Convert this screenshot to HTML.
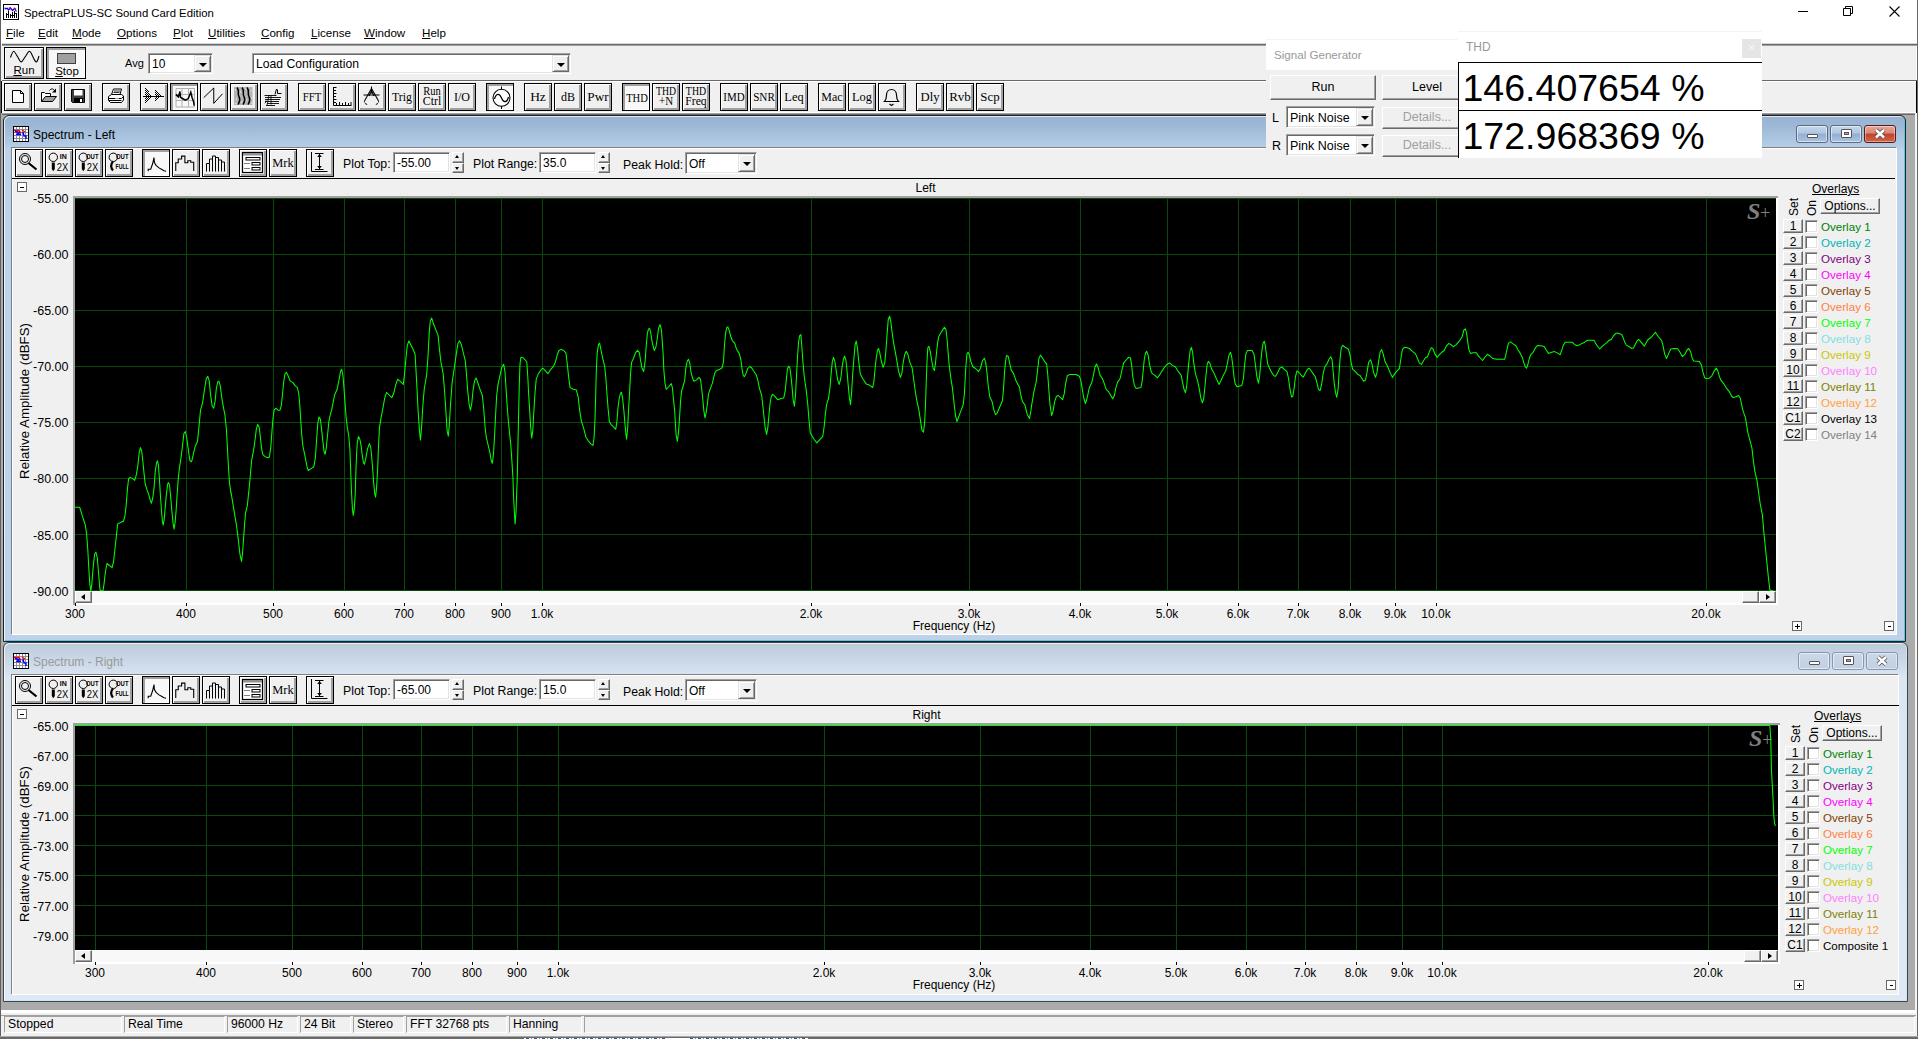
<!DOCTYPE html>
<html><head><meta charset="utf-8"><title>SpectraPLUS-SC Sound Card Edition</title>
<style>
html,body{margin:0;padding:0}
body{width:1918px;height:1039px;position:relative;overflow:hidden;background:#fff;font-family:"Liberation Sans",sans-serif;font-size:12px;color:#000}
div,svg{position:absolute;box-sizing:border-box}
.t{white-space:nowrap;line-height:16px;height:16px}
.tc{white-space:nowrap;line-height:16px;height:16px;text-align:center}
.tr{white-space:nowrap;line-height:16px;height:16px;text-align:right}
.ui{font-family:"Liberation Sans",sans-serif;font-size:12px}
.tb{background:#f0f0f0;border:1px solid #000;box-shadow:inset 1px 1px 0 #fff,inset -1px -1px 0 #a0a0a0,inset -2px -2px 0 #a0a0a0}
.tbp{background:#f8f8f8;border:1px solid #000;box-shadow:inset 1px 1px 0 #a0a0a0,inset 2px 2px 0 #a0a0a0,inset -1px -1px 0 #fff}
.tb svg{left:0;top:0}
.tbp svg{left:1px;top:1px}
.sf{font-family:"Liberation Serif",serif;font-size:13px;text-align:center;white-space:nowrap;transform:scaleX(.88)}
.sunk{background:#fff;border:1px solid;border-color:#a0a0a0 #fff #fff #a0a0a0;box-shadow:inset 1px 1px 0 #696969,inset -1px -1px 0 #e3e3e3}
.rais{background:#f0f0f0;border:1px solid;border-color:#fff #696969 #696969 #fff;box-shadow:inset -1px -1px 0 #a0a0a0,inset 1px 1px 0 #f0f0f0}
.dd{background:#f0f0f0;border:1px solid;border-color:#e3e3e3 #696969 #696969 #e3e3e3;box-shadow:inset 1px 1px 0 #fff,inset -1px -1px 0 #a0a0a0}
.dd:after{content:"";position:absolute;left:50%;top:50%;margin:-1px 0 0 -4px;border:4px solid transparent;border-top:4px solid #000;border-bottom:none}
.obtn{background:#f0f0f0;border:1px solid;border-color:#fff #696969 #696969 #fff;box-shadow:inset -1px -1px 0 #a0a0a0;text-align:center;line-height:12px;font-size:12px}
.chk{background:#fff;border:1px solid;border-color:#a0a0a0 #fff #fff #a0a0a0;box-shadow:inset 1px 1px 0 #696969,inset -1px -1px 0 #e3e3e3}
.pm{background:#fff;border:1px solid #696969;font-size:11px;line-height:8px;text-align:center;font-weight:bold}
u{text-decoration:underline}
</style></head>
<body>
<div style="left:0px;top:0px;width:1918px;height:43px;background:#fff"></div>
<svg style="left:3px;top:4px" width="16" height="16" viewBox="0 0 16 16"><rect x="0.500" y="0.500" width="15" height="15" fill="#fff" stroke="#000"/><path d="M1.500 4.500h3l1 1.500l2-2l2 2.500l2-2l2 3" stroke="#00f" fill="none" stroke-width="1.300"/><path d="M6 3.500l2 1.500M11 4l2 1" stroke="#f00" fill="none" stroke-width="1.300"/><path d="M3.500 14v-5M5.500 14v-7M7.500 14v-4M9.500 14v-6M11.500 14v-7M13.500 14v-5M3 10.500h3M8 11.500h3M11 9.500h3" stroke="#000"/></svg>
<div class="t" id="apptitle" style="left:24px;top:5px;font-size:11.35px">SpectraPLUS-SC Sound Card Edition</div>
<svg style="left:1780px;top:0" width="138" height="23" viewBox="0 0 138 23"><path d="M18 11.5h10" stroke="#000" fill="none"/><path d="M63.5 8.500h7v7h-7z M65.500 8.500v-2h7v7h-2" stroke="#000" fill="none"/><path d="M109.500 6.500l10 10M119.500 6.500l-10 10" stroke="#000" fill="none" stroke-width="1.1"/></svg>
<div class="t mn" style="left:6px;top:25px;font-size:11.600px"><u>F</u>ile</div>
<div class="t mn" style="left:38px;top:25px;font-size:11.600px"><u>E</u>dit</div>
<div class="t mn" style="left:72px;top:25px;font-size:11.600px"><u>M</u>ode</div>
<div class="t mn" style="left:117px;top:25px;font-size:11.600px"><u>O</u>ptions</div>
<div class="t mn" style="left:173px;top:25px;font-size:11.600px"><u>P</u>lot</div>
<div class="t mn" style="left:208px;top:25px;font-size:11.600px"><u>U</u>tilities</div>
<div class="t mn" style="left:261px;top:25px;font-size:11.600px"><u>C</u>onfig</div>
<div class="t mn" style="left:311px;top:25px;font-size:11.600px"><u>L</u>icense</div>
<div class="t mn" style="left:364px;top:25px;font-size:11.600px"><u>W</u>indow</div>
<div class="t mn" style="left:422px;top:25px;font-size:11.600px"><u>H</u>elp</div>
<div style="left:0px;top:43px;width:1918px;height:70px;background:#f0f0f0"></div>
<div style="left:0px;top:43px;width:1918px;height:1px;background:#d8d8d8"></div>
<div style="left:0px;top:44px;width:1918px;height:1px;background:#696969"></div>
<div style="left:0px;top:45px;width:1918px;height:1px;background:#a0a0a0"></div>
<div style="left:0px;top:80px;width:1918px;height:1px;background:#696969"></div>
<div style="left:0px;top:81px;width:1918px;height:1px;background:#fff"></div>
<div style="left:1px;top:112px;width:1914px;height:898px;background:#ababab"></div>
<div style="left:2px;top:112px;width:1914px;height:1px;background:#fff"></div>
<div style="left:2px;top:113px;width:1914px;height:1px;background:#a0a0a0"></div>
<div style="left:2px;top:114px;width:1914px;height:1px;background:#696969"></div>
<div style="left:0px;top:0px;width:1px;height:1039px;background:#606060"></div>
<div style="left:1px;top:43px;width:1px;height:70px;background:#f0f0f0"></div>
<div style="left:1px;top:81px;width:1px;height:32px;background:#000"></div>
<div style="left:1915px;top:113px;width:2px;height:924px;background:#f4f4f4"></div>
<div style="left:1916px;top:81px;width:1px;height:32px;background:#000"></div>
<div style="left:1916px;top:46px;width:1px;height:34px;background:#fff"></div>
<div style="left:1917px;top:0px;width:1px;height:1039px;background:#6a6a6a"></div>
<div class="tb" style="left:4px;top:47px;width:40px;height:32px;"><svg width="38" height="30" viewBox="0 0 38 30"><path d="M5.500 9.500C7 5 8 3.200 8.750 3.200S11 6 12.500 8.600S15 13.900 16.250 13.900S19 10 20.300 8.600S23 3.200 24.400 3.200S26.500 6 27.800 8.600S30 13.900 31.250 13.900S33 11 34 8" stroke="#000" fill="none" stroke-width="1.100"/></svg>
<div class="tc" style="left:0;top:14px;width:38px;font-size:11.500px"><u>R</u>un</div></div>
<div class="tbp" style="left:46px;top:47px;width:40px;height:32px;"><div style="left:10px;top:5px;width:19px;height:11px;background:#a0a0a0;border:1px solid #404040"></div>
<div class="tc" style="left:1px;top:15px;width:38px;font-size:11.500px"><u>S</u>top</div></div>
<div class="t" style="left:125px;top:55px;font-size:11px">Avg</div>
<div class="sunk" style="left:148px;top:53px;width:65px;height:21px;"><div class="t" style="left:3px;top:2px;font-size:12px">10</div>
<div class="dd" style="left:45px;top:1px;width:17px;height:17px;"></div></div>
<div class="sunk" style="left:252px;top:53px;width:319px;height:21px;"><div class="t" style="left:3px;top:2px;font-size:12.2px">Load Configuration</div>
<div class="dd" style="left:299px;top:1px;width:17px;height:17px;"></div></div>
<div class="tb" style="left:4px;top:83px;width:28px;height:28px;"><svg width="26" height="26" viewBox="0 0 26 26"><path d="M7.500 6.500h8l3 3v9h-11z" fill="#fff" stroke="#000"/><path d="M15.500 6.500v3h3" fill="none" stroke="#000"/></svg></div>
<div class="tb" style="left:34px;top:83px;width:28px;height:28px;"><svg width="26" height="26" viewBox="0 0 26 26"><path d="M6.500 17.500v-9h3l1 1h5v3" fill="#fff" stroke="#000"/><path d="M6.500 17.500l4-5h11l-4 5z" fill="#a0a0a0" stroke="#000"/><path d="M14.500 6.500c2-2.500 4-2 5.500 1" fill="none" stroke="#000"/><path d="M21 4.500v4h-4z" fill="#000"/></svg></div>
<div class="tb" style="left:64px;top:83px;width:28px;height:28px;"><svg width="26" height="26" viewBox="0 0 26 26"><path d="M6.500 5.500h13v13h-12l-1-1z" fill="#404040" stroke="#000"/><rect x="9" y="6" width="8.500" height="5.500" fill="#fff"/><rect x="9" y="14" width="9" height="4.500" fill="#000"/><rect x="15" y="15" width="2" height="3" fill="#fff"/></svg></div>
<div class="tb" style="left:102px;top:83px;width:28px;height:28px;"><svg width="26" height="26" viewBox="0 0 26 26"><path d="M8.500 10.500l2-5.500h8l-1.500 5.500" fill="#fff" stroke="#000"/><path d="M11 7h6M10.500 8.500h6" stroke="#000" stroke-width=".8"/><path d="M5.500 12.500l3-2h10l2 1.500v4l-2 2.500h-11l-2-2z" fill="#fff" stroke="#000"/><path d="M5.500 14.500h13l2-2M6 16.500h12.500" stroke="#000" fill="none"/><path d="M12 14.500h4" stroke="#a0a0a0"/></svg></div>
<div class="tb" style="left:140px;top:83px;width:28px;height:28px;"><svg width="26" height="26" viewBox="0 0 26 26"><defs><pattern id="dth" width="2" height="2" patternUnits="userSpaceOnUse"><rect width="1" height="1" fill="#000"/><rect x="1" y="1" width="1" height="1" fill="#000"/></pattern></defs><path d="M4 3.500l7.500 8.500l-7.500 8.500z M13.500 5.500l6.500 6.500l-6.500 6.500z" fill="url(#dth)" shape-rendering="crispEdges"/><path d="M2 12.500h21" stroke="#000"/></svg></div>
<div class="tbp" style="left:170px;top:83px;width:28px;height:28px;"><svg width="26" height="26" viewBox="0 0 26 26"><path d="M4 3.500h18.500v18.500h-18.500zM10 4v18M16.500 4v18M4 9.500h18M4 15.500h18" stroke="#b0b0b0" fill="none"/><path d="M3.800 9.400L6.300 11.900L8 6.500L8.400 12.300L11.300 14L13.400 15.250L16.300 13.600L18.800 7.300L20 12.300L21.750 17.300L22.200 20.700" fill="none" stroke="#000" stroke-width="1.500"/></svg></div>
<div class="tb" style="left:200px;top:83px;width:28px;height:28px;"><svg width="26" height="26" viewBox="0 0 26 26"><path d="M2.750 13.600L12.750 4V19.400L21.500 9.800" fill="none" stroke="#000" stroke-width="1"/></svg></div>
<div class="tb" style="left:230px;top:83px;width:28px;height:28px;"><svg width="26" height="26" viewBox="0 0 26 26"><rect x="3" y="3" width="18.500" height="18" fill="#b4b4b4"/><path d="M6 3.500c3 4 0 5 2 9s0 6 -1 8M11 3.500c3 4 0 5 2 9s0 6 -1 8M16 3.500c3 4 0 5 2 9s0 6 -1 8" fill="none" stroke="#000" stroke-width="1.500"/><path d="M4 6h1M9 8h1M14.500 5h1M19.500 7h1M5 15h1M10 18h1M15 16h1M20 14h1M20 19h1M4.500 19.500h1" stroke="#fff"/></svg></div>
<div class="tb" style="left:260px;top:83px;width:28px;height:28px;"><svg width="26" height="26" viewBox="0 0 26 26"><path d="M3.500 11.500h12M4 13.500h16M4 15.500h15M4 17.500h14M6 19.500h12M5 21.500h9" stroke="#000" stroke-width=".9"/><path d="M14 10.500l1.500-5.500l1 1v3.500h4" fill="none" stroke="#000"/><path d="M3.500 20l1-3.500l1.500.5z" fill="#000"/><path d="M8 11l-2 10.500M10 11.500v9" stroke="#000" stroke-width=".8"/></svg></div>
<div class="tb" style="left:298px;top:83px;width:28px;height:28px;"><svg width="26" height="26" viewBox="0 0 26 26"><text x="13" y="17" text-anchor="middle" font-family="Liberation Serif,serif" font-size="13" textLength="18.5" lengthAdjust="spacingAndGlyphs">FFT</text></svg></div>
<div class="tb" style="left:328px;top:83px;width:28px;height:28px;"><svg width="26" height="26" viewBox="0 0 26 26"><path d="M4.500 3v18.500h18" fill="none" stroke="#000"/><path d="M5 3.500h2.500M5 6.500h2M5 9.500h2.500M5 12.500h2M5 15.500h2.500M5 18.500h2M7.500 21v-2M10.500 21v-3M13.500 21v-2M16.500 21v-3M19.500 21v-2M22 21v-3" stroke="#000"/></svg></div>
<div class="tb" style="left:358px;top:83px;width:28px;height:28px;"><svg width="26" height="26" viewBox="0 0 26 26"><path d="M12.500 2.500v7M4.500 11h16" stroke="#000" fill="none"/><path d="M12.500 4.500L6 16M12.500 4.500L19 16M12.500 7L10 12M12.500 7L15 12" stroke="#000" fill="none" stroke-width="1.100"/><path d="M6 16c-1.500 2 0 4.500 3 4.500M19 16c1.500 2 0 4.500 -3 4.500" stroke="#000" fill="none" stroke-dasharray="2.500 1"/></svg></div>
<div class="tb" style="left:388px;top:83px;width:28px;height:28px;"><svg width="26" height="26" viewBox="0 0 26 26"><text x="13" y="17" text-anchor="middle" font-family="Liberation Serif,serif" font-size="13" textLength="20" lengthAdjust="spacingAndGlyphs">Trig</text></svg></div>
<div class="tb" style="left:418px;top:83px;width:28px;height:28px;"><svg width="26" height="26" viewBox="0 0 26 26"><text x="13" y="11" text-anchor="middle" font-family="Liberation Serif,serif" font-size="11.5" textLength="17.5" lengthAdjust="spacingAndGlyphs">Run</text><text x="13" y="20.500" text-anchor="middle" font-family="Liberation Serif,serif" font-size="11.5" textLength="18.5" lengthAdjust="spacingAndGlyphs">Ctrl</text></svg></div>
<div class="tb" style="left:448px;top:83px;width:28px;height:28px;"><svg width="26" height="26" viewBox="0 0 26 26"><text x="13" y="17" text-anchor="middle" font-family="Liberation Serif,serif" font-size="13" textLength="16" lengthAdjust="spacingAndGlyphs">I/O</text></svg></div>
<div class="tbp" style="left:486px;top:83px;width:28px;height:28px;"><svg width="26" height="26" viewBox="0 0 26 26"><circle cx="13.500" cy="12.800" r="8.500" fill="#fff" stroke="#000" stroke-width="1.100"/><path d="M13.500 1.500v3M13.500 21v3" stroke="#000"/><path d="M6.500 14c1.500-6 5-6 7-1s5.500 5 7-1" fill="none" stroke="#000" stroke-width="1.200"/></svg></div>
<div class="tb" style="left:524px;top:83px;width:28px;height:28px;"><svg width="26" height="26" viewBox="0 0 26 26"><text x="13" y="17" text-anchor="middle" font-family="Liberation Serif,serif" font-size="13" textLength="15.7" lengthAdjust="spacingAndGlyphs">Hz</text></svg></div>
<div class="tb" style="left:554px;top:83px;width:28px;height:28px;"><svg width="26" height="26" viewBox="0 0 26 26"><text x="13" y="17" text-anchor="middle" font-family="Liberation Serif,serif" font-size="13" textLength="14" lengthAdjust="spacingAndGlyphs">dB</text></svg></div>
<div class="tb" style="left:584px;top:83px;width:28px;height:28px;"><svg width="26" height="26" viewBox="0 0 26 26"><text x="13" y="17" text-anchor="middle" font-family="Liberation Serif,serif" font-size="13" textLength="21.3" lengthAdjust="spacingAndGlyphs">Pwr</text></svg></div>
<div class="tbp" style="left:622px;top:83px;width:28px;height:28px;"><svg width="26" height="26" viewBox="0 0 26 26"><text x="13" y="17" text-anchor="middle" font-family="Liberation Serif,serif" font-size="13" textLength="21.7" lengthAdjust="spacingAndGlyphs">THD</text></svg></div>
<div class="tb" style="left:652px;top:83px;width:28px;height:28px;"><svg width="26" height="26" viewBox="0 0 26 26"><text x="13" y="11" text-anchor="middle" font-family="Liberation Serif,serif" font-size="11.5" textLength="20" lengthAdjust="spacingAndGlyphs">THD</text><text x="13" y="20.500" text-anchor="middle" font-family="Liberation Serif,serif" font-size="11.5" textLength="14" lengthAdjust="spacingAndGlyphs">+N</text></svg></div>
<div class="tb" style="left:682px;top:83px;width:28px;height:28px;"><svg width="26" height="26" viewBox="0 0 26 26"><text x="13" y="11" text-anchor="middle" font-family="Liberation Serif,serif" font-size="11.5" textLength="20.3" lengthAdjust="spacingAndGlyphs">THD</text><text x="13" y="20.500" text-anchor="middle" font-family="Liberation Serif,serif" font-size="11.5" textLength="21.5" lengthAdjust="spacingAndGlyphs">Freq</text></svg></div>
<div class="tb" style="left:720px;top:83px;width:28px;height:28px;"><svg width="26" height="26" viewBox="0 0 26 26"><text x="13" y="17" text-anchor="middle" font-family="Liberation Serif,serif" font-size="13" textLength="21.3" lengthAdjust="spacingAndGlyphs">IMD</text></svg></div>
<div class="tb" style="left:750px;top:83px;width:28px;height:28px;"><svg width="26" height="26" viewBox="0 0 26 26"><text x="13" y="17" text-anchor="middle" font-family="Liberation Serif,serif" font-size="13" textLength="21.7" lengthAdjust="spacingAndGlyphs">SNR</text></svg></div>
<div class="tb" style="left:780px;top:83px;width:28px;height:28px;"><svg width="26" height="26" viewBox="0 0 26 26"><text x="13" y="17" text-anchor="middle" font-family="Liberation Serif,serif" font-size="13" textLength="19.3" lengthAdjust="spacingAndGlyphs">Leq</text></svg></div>
<div class="tb" style="left:818px;top:83px;width:28px;height:28px;"><svg width="26" height="26" viewBox="0 0 26 26"><text x="13" y="17" text-anchor="middle" font-family="Liberation Serif,serif" font-size="13" textLength="21.3" lengthAdjust="spacingAndGlyphs">Mac</text></svg></div>
<div class="tb" style="left:848px;top:83px;width:28px;height:28px;"><svg width="26" height="26" viewBox="0 0 26 26"><text x="13" y="17" text-anchor="middle" font-family="Liberation Serif,serif" font-size="13" textLength="20" lengthAdjust="spacingAndGlyphs">Log</text></svg></div>
<div class="tb" style="left:878px;top:83px;width:28px;height:28px;"><svg width="26" height="26" viewBox="0 0 26 26"><path d="M5.500 17.500h14c-2-2-2-4-2-6.500c0-3-2-5.500-5-5.500s-5 2.500-5 5.500c0 2.500 0 4.500-2 6.500z" fill="none" stroke="#000" stroke-width="1.200"/><path d="M10.500 20l2 1.500l2-1.500" fill="none" stroke="#000" stroke-width="1.200"/></svg></div>
<div class="tb" style="left:916px;top:83px;width:28px;height:28px;"><svg width="26" height="26" viewBox="0 0 26 26"><text x="13" y="17" text-anchor="middle" font-family="Liberation Serif,serif" font-size="13" textLength="19" lengthAdjust="spacingAndGlyphs">Dly</text></svg></div>
<div class="tb" style="left:946px;top:83px;width:28px;height:28px;"><svg width="26" height="26" viewBox="0 0 26 26"><text x="13" y="17" text-anchor="middle" font-family="Liberation Serif,serif" font-size="13" textLength="21.7" lengthAdjust="spacingAndGlyphs">Rvb</text></svg></div>
<div class="tb" style="left:976px;top:83px;width:28px;height:28px;"><svg width="26" height="26" viewBox="0 0 26 26"><text x="13" y="17" text-anchor="middle" font-family="Liberation Serif,serif" font-size="13" textLength="19.3" lengthAdjust="spacingAndGlyphs">Scp</text></svg></div>
<div style="left:3px;top:115px;width:1903px;height:527px;background:linear-gradient(#98b3d1 0,#9db8d6 10px,#b4cce6 30px,#bcd3ec 34px,#bcd2ea 100%);border:1px solid #222;border-radius:6px 6px 0 0;box-shadow:inset 1px 1px 0 rgba(255,255,255,.7),inset -1px -1px 0 #50c8f0"></div>
<div style="left:11px;top:147px;width:1885px;height:487px;background:#f0f0f0;border-top:1px solid #808080;border-left:1px solid #808080;box-shadow:1px 1px 0 #fff,inset 1px 1px 0 #fff"></div>
<svg style="left:13px;top:126px" width="16" height="16" viewBox="0 0 16 16"><rect x="0.500" y="0.500" width="15" height="15" fill="#fff" stroke="#000"/><path d="M3.500 1v14M6.500 1v14M9.500 1v14M12.500 1v14M1 3.500h14M1 6.500h14M1 9.500h14M1 12.500h14" stroke="#909090"/><path d="M1 4.500h5l2 3M9 4l3 2" stroke="#f00" fill="none" stroke-width="1.4"/><path d="M2 5.500l4 1l-2 2l4 0M10 6l1 4l2 0l0 3" stroke="#00f" fill="none" stroke-width="1.4"/></svg>
<div class="t" style="left:33px;top:127px;color:#000;font-size:12px">Spectrum - Left</div>
<div style="left:1796px;top:125px;width:32px;height:18px;background:linear-gradient(#c4d6ea 0,#b0c6e0 45%,#93aed0 50%,#a9c4e2 100%);border:1px solid #5a6a80;border-radius:3px;box-shadow:inset 0 0 0 1px rgba(255,255,255,.55)"><div style="left:10px;top:8px;width:11px;height:4px;background:#fff;border:1px solid #555;border-radius:1px"></div></div>
<div style="left:1830px;top:125px;width:32px;height:18px;background:linear-gradient(#c4d6ea 0,#b0c6e0 45%,#93aed0 50%,#a9c4e2 100%);border:1px solid #5a6a80;border-radius:3px;box-shadow:inset 0 0 0 1px rgba(255,255,255,.55)"><div style="left:10px;top:3px;width:11px;height:9px;background:#fff;border:1px solid #555;border-radius:1px"></div>
<div style="left:13px;top:6px;width:5px;height:3px;background:#9ab;border:1px solid #556"></div></div>
<div style="left:1864px;top:125px;width:32px;height:18px;background:linear-gradient(#e8a99a 0,#d98472 45%,#c4412a 50%,#d0654a 100%);border:1px solid #5a1a1a;border-radius:3px;box-shadow:inset 0 0 0 1px rgba(255,255,255,.4)"><svg width="29" height="16" viewBox="0 0 29 16" style="left:0;top:0"><path d="M11 4l8 7.500M19 4l-8 7.500" stroke="#555" stroke-width="4.200" fill="none"/><path d="M11 4l8 7.500M19 4l-8 7.500" stroke="#fff" stroke-width="2.400" fill="none"/></svg></div>
<div class="tb" style="left:15px;top:149px;width:28px;height:28px;"><svg width="26" height="26" viewBox="0 0 26 26"><circle cx="9" cy="9" r="5.500" fill="none" stroke="#000" stroke-width="1"/><circle cx="9" cy="9" r="3.500" fill="none" stroke="#000" stroke-width="1"/><path d="M12.500 13l8 6.500" stroke="#000" stroke-width="2.200"/></svg></div>
<div class="tb" style="left:45px;top:149px;width:28px;height:28px;"><svg width="26" height="26" viewBox="0 0 26 26"><circle cx="7.300" cy="7.300" r="4.200" fill="none" stroke="#000"/><path d="M5.800 12.500h3v6.500l-1.500 2.200l-1.500-2.200z" fill="#000"/><text x="13.800" y="9.200" font-family="Liberation Sans,sans-serif" font-weight="bold" font-size="6.800" textLength="7" lengthAdjust="spacingAndGlyphs">IN</text><text x="10.800" y="20.800" font-family="Liberation Sans,sans-serif" font-size="11.500" textLength="11.500" lengthAdjust="spacingAndGlyphs">2X</text></svg></div>
<div class="tb" style="left:75px;top:149px;width:28px;height:28px;"><svg width="26" height="26" viewBox="0 0 26 26"><circle cx="7.300" cy="7.300" r="4.200" fill="none" stroke="#000"/><path d="M5.800 12.500h3v6.500l-1.500 2.200l-1.500-2.200z" fill="#000"/><text x="10" y="9.200" font-family="Liberation Sans,sans-serif" font-weight="bold" font-size="6.800" textLength="12.500" lengthAdjust="spacingAndGlyphs">OUT</text><text x="10.800" y="20.800" font-family="Liberation Sans,sans-serif" font-size="11.500" textLength="11.500" lengthAdjust="spacingAndGlyphs">2X</text></svg></div>
<div class="tb" style="left:105px;top:149px;width:28px;height:28px;"><svg width="26" height="26" viewBox="0 0 26 26"><circle cx="7.300" cy="7.300" r="4.200" fill="none" stroke="#000"/><path d="M7 11.500c-2.500 3-2 6.500 0 9" stroke="#000" stroke-width="2.200" fill="none"/><text x="10" y="9.200" font-family="Liberation Sans,sans-serif" font-weight="bold" font-size="6.800" textLength="12.500" lengthAdjust="spacingAndGlyphs">OUT</text><text x="9.500" y="18.800" font-family="Liberation Sans,sans-serif" font-weight="bold" font-size="6.800" textLength="13.300" lengthAdjust="spacingAndGlyphs">FULL</text></svg></div>
<div class="tbp" style="left:142px;top:149px;width:28px;height:28px;"><svg width="26" height="26" viewBox="0 0 26 26"><path d="M4.200 20.250V18.200H6.700L8.750 12.300L10 6.500L10.400 11.500L12.100 14.400L15 16.900L17.500 18.200L20 19.800L22.100 20.250" fill="none" stroke="#000" stroke-width="1.100"/></svg></div>
<div class="tb" style="left:172px;top:149px;width:28px;height:28px;"><svg width="26" height="26" viewBox="0 0 26 26"><path d="M2.750 21.100V12.750H5.250V9H8.600V6.100H11.900V12.750H14.800V10.700H17.750V12.300H20.700V21.100" fill="none" stroke="#000" stroke-width="1.100"/></svg></div>
<div class="tb" style="left:202px;top:149px;width:28px;height:28px;"><svg width="26" height="26" viewBox="0 0 26 26"><path d="M3.500 21.500V13.500H6.500V21.500M6.500 13.500V9H9.500V21.500M9.500 9V6H12.500V21.500M12.500 7.500H15.500V21.500M15.500 10H18.500V21.500M18.500 12H21.500V21.500" fill="none" stroke="#000"/></svg></div>
<div class="tb" style="left:239px;top:149px;width:28px;height:28px;"><svg width="26" height="26" viewBox="0 0 26 26"><rect x="2.500" y="2.500" width="20" height="20" fill="#fff" stroke="#000" stroke-width="1.200"/><rect x="3" y="3" width="19" height="2.500" fill="#909090"/><path d="M4.500 13.500h5M4.500 18.500h5" stroke="#000" stroke-dasharray="1 1"/><rect x="6" y="7.500" width="14" height="2.500" fill="#fff" stroke="#000"/><rect x="12" y="12.500" width="8" height="2.500" fill="#fff" stroke="#000"/><rect x="12" y="17.500" width="8" height="2.500" fill="#fff" stroke="#000"/></svg></div>
<div class="tb" style="left:269px;top:149px;width:28px;height:28px;"><svg width="26" height="26" viewBox="0 0 26 26"><text x="13" y="17.3" text-anchor="middle" font-family="Liberation Serif,serif" font-size="13" textLength="21.4" lengthAdjust="spacingAndGlyphs">Mrk</text></svg></div>
<div class="tb" style="left:306px;top:149px;width:28px;height:28px;"><svg width="26" height="26" viewBox="0 0 26 26"><path d="M4.500 2v19.500h16" fill="none" stroke="#000"/><path d="M8 3.500h8.500M8 19.500h8.500M12.500 4v15" stroke="#000"/><path d="M12.500 4l-2.300 3h4.600z M12.500 19l-2.300-3h4.600z" fill="#000"/></svg></div>
<div class="t" style="left:343px;top:156px;font-size:12.300px">Plot Top:</div>
<div class="sunk" style="left:393px;top:152px;width:57px;height:21px;"><div class="t" style="left:3px;top:2px">-55.00</div></div>
<div class="rais" style="left:452px;top:152px;width:12px;height:11px;"><div style="left:2px;top:2px;border:2.500px solid transparent;border-bottom:3px solid #000;border-top:none"></div></div>
<div class="rais" style="left:452px;top:163px;width:12px;height:10px;"><div style="left:2px;top:3px;border:2.500px solid transparent;border-top:3px solid #000;border-bottom:none"></div></div>
<div class="t" style="left:473px;top:156px;font-size:12.300px">Plot Range:</div>
<div class="sunk" style="left:539px;top:152px;width:57px;height:21px;"><div class="t" style="left:3px;top:2px">35.0</div></div>
<div class="rais" style="left:598px;top:152px;width:12px;height:11px;"><div style="left:2px;top:2px;border:2.500px solid transparent;border-bottom:3px solid #000;border-top:none"></div></div>
<div class="rais" style="left:598px;top:163px;width:12px;height:10px;"><div style="left:2px;top:3px;border:2.500px solid transparent;border-top:3px solid #000;border-bottom:none"></div></div>
<div class="t" style="left:623px;top:157px;font-size:12.300px">Peak Hold:</div>
<div class="sunk" style="left:685px;top:152px;width:72px;height:22px;"><div class="t" style="left:3px;top:3px;font-size:12px">Off</div>
<div class="dd" style="left:52px;top:1px;width:17px;height:18px;"></div></div>
<div style="left:12px;top:178px;width:1883px;height:1px;background:#000"></div>
<div class="pm" style="left:17px;top:182px;width:10px;height:10px;"><div style="left:2px;top:4px;width:4px;height:1px;background:#000"></div></div>
<div class="tc" style="left:75px;top:180px;width:1701px">Left</div>
<div class="tc" style="left:-75px;top:392.5px;width:200px;transform:rotate(-90deg);font-size:13.300px">Relative Amplitude (dBFS)</div>
<div class="tr" style="left:8px;top:190.9px;width:60.500px;font-size:12.500px">-55.00</div>
<div class="tr" style="left:8px;top:247.0px;width:60.500px;font-size:12.500px">-60.00</div>
<div class="tr" style="left:8px;top:303.1px;width:60.500px;font-size:12.500px">-65.00</div>
<div class="tr" style="left:8px;top:359.20000000000005px;width:60.500px;font-size:12.500px">-70.00</div>
<div class="tr" style="left:8px;top:415.3px;width:60.500px;font-size:12.500px">-75.00</div>
<div class="tr" style="left:8px;top:471.4px;width:60.500px;font-size:12.500px">-80.00</div>
<div class="tr" style="left:8px;top:527.5px;width:60.500px;font-size:12.500px">-85.00</div>
<div class="tr" style="left:8px;top:583.6px;width:60.500px;font-size:12.500px">-90.00</div>
<div style="left:73px;top:196px;width:1705px;height:409px;background:#fff;border-top:2px solid #a0a0a0;border-left:2px solid #a0a0a0"></div>
<div style="left:3px;top:642px;width:1905px;height:360px;background:linear-gradient(#bdcbdb 0,#c4d2e2 10px,#d4e0ee 28px,#dbe6f3 34px,#dfe9f5 100%);border:1px solid #444;border-radius:6px 6px 0 0;box-shadow:inset 1px 1px 0 rgba(255,255,255,.7),inset -1px -1px 0 #c8e8f8"></div>
<div style="left:11px;top:674px;width:1887px;height:320px;background:#f0f0f0;border-top:1px solid #808080;border-left:1px solid #808080;box-shadow:1px 1px 0 #fff,inset 1px 1px 0 #fff"></div>
<svg style="left:13px;top:653px" width="16" height="16" viewBox="0 0 16 16"><rect x="0.500" y="0.500" width="15" height="15" fill="#fff" stroke="#000"/><path d="M3.500 1v14M6.500 1v14M9.500 1v14M12.500 1v14M1 3.500h14M1 6.500h14M1 9.500h14M1 12.500h14" stroke="#909090"/><path d="M1 4.500h5l2 3M9 4l3 2" stroke="#f00" fill="none" stroke-width="1.4"/><path d="M2 5.500l4 1l-2 2l4 0M10 6l1 4l2 0l0 3" stroke="#00f" fill="none" stroke-width="1.4"/></svg>
<div class="t" style="left:33px;top:654px;color:#9a9a9a;font-size:12px">Spectrum - Right</div>
<div style="left:1798px;top:652px;width:32px;height:18px;background:linear-gradient(#cbd8e7 0,#c0cfe2 100%);border:1px solid #8797b3;border-radius:3px;box-shadow:inset 0 0 0 1px rgba(255,255,255,.55)"><div style="left:10px;top:8px;width:11px;height:4px;background:#fff;border:1px solid #555;border-radius:1px"></div></div>
<div style="left:1832px;top:652px;width:32px;height:18px;background:linear-gradient(#cbd8e7 0,#c0cfe2 100%);border:1px solid #8797b3;border-radius:3px;box-shadow:inset 0 0 0 1px rgba(255,255,255,.55)"><div style="left:10px;top:3px;width:11px;height:9px;background:#fff;border:1px solid #555;border-radius:1px"></div>
<div style="left:13px;top:6px;width:5px;height:3px;background:#9ab;border:1px solid #556"></div></div>
<div style="left:1866px;top:652px;width:32px;height:18px;background:linear-gradient(#cbd8e7 0,#c0cfe2 100%);border:1px solid #8797b3;border-radius:3px;box-shadow:inset 0 0 0 1px rgba(255,255,255,.4)"><svg width="29" height="16" viewBox="0 0 29 16" style="left:0;top:0"><path d="M11 4l8 7.500M19 4l-8 7.500" stroke="#555" stroke-width="4.200" fill="none"/><path d="M11 4l8 7.500M19 4l-8 7.500" stroke="#fff" stroke-width="2.400" fill="none"/></svg></div>
<div class="tb" style="left:15px;top:676px;width:28px;height:28px;"><svg width="26" height="26" viewBox="0 0 26 26"><circle cx="9" cy="9" r="5.500" fill="none" stroke="#000" stroke-width="1"/><circle cx="9" cy="9" r="3.500" fill="none" stroke="#000" stroke-width="1"/><path d="M12.500 13l8 6.500" stroke="#000" stroke-width="2.200"/></svg></div>
<div class="tb" style="left:45px;top:676px;width:28px;height:28px;"><svg width="26" height="26" viewBox="0 0 26 26"><circle cx="7.300" cy="7.300" r="4.200" fill="none" stroke="#000"/><path d="M5.800 12.500h3v6.500l-1.500 2.200l-1.500-2.200z" fill="#000"/><text x="13.800" y="9.200" font-family="Liberation Sans,sans-serif" font-weight="bold" font-size="6.800" textLength="7" lengthAdjust="spacingAndGlyphs">IN</text><text x="10.800" y="20.800" font-family="Liberation Sans,sans-serif" font-size="11.500" textLength="11.500" lengthAdjust="spacingAndGlyphs">2X</text></svg></div>
<div class="tb" style="left:75px;top:676px;width:28px;height:28px;"><svg width="26" height="26" viewBox="0 0 26 26"><circle cx="7.300" cy="7.300" r="4.200" fill="none" stroke="#000"/><path d="M5.800 12.500h3v6.500l-1.500 2.200l-1.500-2.200z" fill="#000"/><text x="10" y="9.200" font-family="Liberation Sans,sans-serif" font-weight="bold" font-size="6.800" textLength="12.500" lengthAdjust="spacingAndGlyphs">OUT</text><text x="10.800" y="20.800" font-family="Liberation Sans,sans-serif" font-size="11.500" textLength="11.500" lengthAdjust="spacingAndGlyphs">2X</text></svg></div>
<div class="tb" style="left:105px;top:676px;width:28px;height:28px;"><svg width="26" height="26" viewBox="0 0 26 26"><circle cx="7.300" cy="7.300" r="4.200" fill="none" stroke="#000"/><path d="M7 11.500c-2.500 3-2 6.500 0 9" stroke="#000" stroke-width="2.200" fill="none"/><text x="10" y="9.200" font-family="Liberation Sans,sans-serif" font-weight="bold" font-size="6.800" textLength="12.500" lengthAdjust="spacingAndGlyphs">OUT</text><text x="9.500" y="18.800" font-family="Liberation Sans,sans-serif" font-weight="bold" font-size="6.800" textLength="13.300" lengthAdjust="spacingAndGlyphs">FULL</text></svg></div>
<div class="tbp" style="left:142px;top:676px;width:28px;height:28px;"><svg width="26" height="26" viewBox="0 0 26 26"><path d="M4.200 20.250V18.200H6.700L8.750 12.300L10 6.500L10.400 11.500L12.100 14.400L15 16.900L17.500 18.200L20 19.800L22.100 20.250" fill="none" stroke="#000" stroke-width="1.100"/></svg></div>
<div class="tb" style="left:172px;top:676px;width:28px;height:28px;"><svg width="26" height="26" viewBox="0 0 26 26"><path d="M2.750 21.100V12.750H5.250V9H8.600V6.100H11.900V12.750H14.800V10.700H17.750V12.300H20.700V21.100" fill="none" stroke="#000" stroke-width="1.100"/></svg></div>
<div class="tb" style="left:202px;top:676px;width:28px;height:28px;"><svg width="26" height="26" viewBox="0 0 26 26"><path d="M3.500 21.500V13.500H6.500V21.500M6.500 13.500V9H9.500V21.500M9.500 9V6H12.500V21.500M12.500 7.500H15.500V21.500M15.500 10H18.500V21.500M18.500 12H21.500V21.500" fill="none" stroke="#000"/></svg></div>
<div class="tb" style="left:239px;top:676px;width:28px;height:28px;"><svg width="26" height="26" viewBox="0 0 26 26"><rect x="2.500" y="2.500" width="20" height="20" fill="#fff" stroke="#000" stroke-width="1.200"/><rect x="3" y="3" width="19" height="2.500" fill="#909090"/><path d="M4.500 13.500h5M4.500 18.500h5" stroke="#000" stroke-dasharray="1 1"/><rect x="6" y="7.500" width="14" height="2.500" fill="#fff" stroke="#000"/><rect x="12" y="12.500" width="8" height="2.500" fill="#fff" stroke="#000"/><rect x="12" y="17.500" width="8" height="2.500" fill="#fff" stroke="#000"/></svg></div>
<div class="tb" style="left:269px;top:676px;width:28px;height:28px;"><svg width="26" height="26" viewBox="0 0 26 26"><text x="13" y="17.3" text-anchor="middle" font-family="Liberation Serif,serif" font-size="13" textLength="21.4" lengthAdjust="spacingAndGlyphs">Mrk</text></svg></div>
<div class="tb" style="left:306px;top:676px;width:28px;height:28px;"><svg width="26" height="26" viewBox="0 0 26 26"><path d="M4.500 2v19.500h16" fill="none" stroke="#000"/><path d="M8 3.500h8.500M8 19.500h8.500M12.500 4v15" stroke="#000"/><path d="M12.500 4l-2.300 3h4.600z M12.500 19l-2.300-3h4.600z" fill="#000"/></svg></div>
<div class="t" style="left:343px;top:683px;font-size:12.300px">Plot Top:</div>
<div class="sunk" style="left:393px;top:679px;width:57px;height:21px;"><div class="t" style="left:3px;top:2px">-65.00</div></div>
<div class="rais" style="left:452px;top:679px;width:12px;height:11px;"><div style="left:2px;top:2px;border:2.500px solid transparent;border-bottom:3px solid #000;border-top:none"></div></div>
<div class="rais" style="left:452px;top:690px;width:12px;height:10px;"><div style="left:2px;top:3px;border:2.500px solid transparent;border-top:3px solid #000;border-bottom:none"></div></div>
<div class="t" style="left:473px;top:683px;font-size:12.300px">Plot Range:</div>
<div class="sunk" style="left:539px;top:679px;width:57px;height:21px;"><div class="t" style="left:3px;top:2px">15.0</div></div>
<div class="rais" style="left:598px;top:679px;width:12px;height:11px;"><div style="left:2px;top:2px;border:2.500px solid transparent;border-bottom:3px solid #000;border-top:none"></div></div>
<div class="rais" style="left:598px;top:690px;width:12px;height:10px;"><div style="left:2px;top:3px;border:2.500px solid transparent;border-top:3px solid #000;border-bottom:none"></div></div>
<div class="t" style="left:623px;top:684px;font-size:12.300px">Peak Hold:</div>
<div class="sunk" style="left:685px;top:679px;width:72px;height:22px;"><div class="t" style="left:3px;top:3px;font-size:12px">Off</div>
<div class="dd" style="left:52px;top:1px;width:17px;height:18px;"></div></div>
<div style="left:12px;top:705px;width:1887px;height:1px;background:#000"></div>
<div class="pm" style="left:17px;top:709px;width:10px;height:10px;"><div style="left:2px;top:4px;width:4px;height:1px;background:#000"></div></div>
<div class="tc" style="left:75px;top:707px;width:1703px">Right</div>
<div class="tc" style="left:-75px;top:835.5px;width:200px;transform:rotate(-90deg);font-size:13.300px">Relative Amplitude (dBFS)</div>
<div class="tr" style="left:8px;top:718.8px;width:60.500px;font-size:12.500px">-65.00</div>
<div class="tr" style="left:8px;top:748.8px;width:60.500px;font-size:12.500px">-67.00</div>
<div class="tr" style="left:8px;top:778.8px;width:60.500px;font-size:12.500px">-69.00</div>
<div class="tr" style="left:8px;top:808.8px;width:60.500px;font-size:12.500px">-71.00</div>
<div class="tr" style="left:8px;top:838.8px;width:60.500px;font-size:12.500px">-73.00</div>
<div class="tr" style="left:8px;top:868.8px;width:60.500px;font-size:12.500px">-75.00</div>
<div class="tr" style="left:8px;top:898.8px;width:60.500px;font-size:12.500px">-77.00</div>
<div class="tr" style="left:8px;top:928.8px;width:60.500px;font-size:12.500px">-79.00</div>
<div style="left:73px;top:723px;width:1707px;height:241px;background:#fff;border-top:2px solid #a0a0a0;border-left:2px solid #a0a0a0"></div>
<svg style="left:75px;top:198px" width="1701" height="393" viewBox="75 198 1701 393" shape-rendering="crispEdges"><rect x="75" y="198" width="1701" height="393" fill="#000"/><path d="M186.5 198V591M273.5 198V591M344.5 198V591M404.5 198V591M455.5 198V591M501.5 198V591M542.5 198V591M811.5 198V591M969.5 198V591M1080.5 198V591M1167.5 198V591M1238.5 198V591M1298.5 198V591M1350.5 198V591M1395.5 198V591M1436.5 198V591M1706.5 198V591M75 198.5H1776M75 254.5H1776M75 310.5H1776M75 366.5H1776M75 422.5H1776M75 478.5H1776M75 534.5H1776M75 590.5H1776" stroke="#084808" fill="none" stroke-width="1"/><text x="1747" y="219" font-family="Liberation Serif,serif" font-style="italic" font-weight="bold" font-size="24" fill="#808080">S</text><text x="1759" y="219" font-family="Liberation Serif,serif" font-style="italic" font-size="18" fill="#808080">+</text><polyline points="75.1,507.3 79.7,507.3 82.5,516.4 85.2,524.5 86.6,533.6 87.8,549.8 88.8,568.0 89.8,584.1 90.8,590.8 91.8,584.1 93.3,565.9 94.7,553.8 95.9,552.2 97.3,557.8 98.5,572.0 99.7,587.2 100.3,590.8 103.0,590.8 104.0,584.1 105.4,572.0 107.0,563.5 109.4,565.5 112.1,567.6 113.5,561.9 114.9,549.8 116.5,534.6 117.7,523.9 120.6,522.5 123.6,521.0 125.0,515.4 126.2,505.3 127.4,489.1 128.6,479.0 130.3,477.4 132.7,478.6 134.7,480.4 136.3,474.9 137.7,466.8 139.2,452.7 140.4,447.6 141.6,450.7 142.8,460.8 144.0,472.9 145.2,484.0 146.8,489.1 148.9,495.2 150.5,501.2 151.5,503.2 152.9,497.2 154.1,487.1 155.3,470.9 156.6,462.8 157.4,460.8 158.4,464.8 159.4,479.0 160.4,495.2 161.4,509.3 162.4,521.4 163.2,525.1 164.2,519.4 165.2,507.3 166.5,493.1 167.7,484.0 168.5,482.6 169.5,485.0 170.7,497.2 171.9,511.3 173.1,523.5 174.1,529.1 175.2,521.4 176.2,509.3 177.2,493.1 178.4,477.0 179.6,466.8 181.2,456.7 182.6,444.6 183.9,433.5 185.3,431.5 186.5,436.5 187.9,446.6 189.3,456.7 190.0,460.8 191.6,461.8 193.0,455.7 195.1,446.6 197.5,441.6 199.1,425.4 200.5,410.2 202.5,403.1 204.6,389.0 206.2,378.9 207.8,376.4 209.2,380.9 210.6,395.0 212.2,406.2 213.7,408.2 215.1,401.1 216.3,389.0 217.7,381.9 218.9,381.3 220.3,385.9 221.7,397.1 223.4,407.2 225.0,415.3 226.4,429.4 227.4,447.6 228.4,465.8 229.4,482.0 231.1,494.1 230.8,491.1 232.8,503.2 234.8,515.4 236.8,527.5 238.3,539.6 239.9,553.8 241.5,561.5 242.5,553.8 243.5,539.6 244.5,525.5 245.5,513.4 247.4,505.3 248.8,491.1 248.6,494.1 250.1,478.0 251.7,459.8 253.7,449.6 255.1,439.5 256.3,429.4 257.7,424.4 259.2,427.4 260.4,437.5 261.6,448.6 262.8,454.7 265.2,456.7 267.9,457.7 269.5,456.7 270.9,445.6 272.1,429.4 272.9,419.3 274.1,410.2 275.9,408.2 278.0,410.2 280.0,410.2 281.4,405.2 282.6,393.0 283.8,380.9 285.0,373.8 286.5,372.4 288.1,375.8 290.1,380.9 293.1,382.9 295.2,385.9 297.4,387.4 298.8,394.0 299.8,405.2 300.8,421.3 301.8,435.5 302.8,445.6 304.5,453.7 306.1,461.8 307.3,467.8 308.3,470.5 310.7,468.9 313.8,466.8 315.4,457.7 316.6,439.5 317.8,423.4 319.0,416.9 320.4,419.3 321.6,429.4 322.9,441.6 324.1,451.7 325.1,454.3 326.3,447.6 327.5,435.5 328.9,421.3 330.1,415.3 331.6,410.2 333.0,403.1 334.6,395.0 337.2,389.0 339.2,378.9 340.7,370.8 341.7,369.4 342.9,374.8 343.9,387.0 344.9,401.1 346.1,417.3 347.3,427.4 348.7,435.5 349.8,447.6 350.6,467.8 351.4,490.1 352.4,508.3 353.2,515.4 354.2,509.3 355.2,494.1 355.8,473.9 356.6,453.7 357.4,441.6 358.5,436.5 359.9,439.5 361.1,445.6 362.3,455.7 363.5,462.8 364.5,464.2 365.9,457.7 367.6,448.6 369.4,443.6 370.6,446.6 371.6,455.7 372.6,467.8 373.6,482.0 374.8,494.1 375.6,497.2 376.7,486.0 377.7,467.8 378.5,445.6 379.5,427.4 381.1,417.3 383.1,407.2 384.7,398.1 386.6,392.4 389.2,395.0 391.8,397.7 393.8,393.0 395.7,384.9 397.7,379.3 400.3,381.3 403.3,384.5 403.3,384.1 404.4,375.3 406.0,357.5 407.3,345.4 408.9,340.9 411.1,345.4 413.3,349.8 415.1,354.2 415.9,368.6 417.0,388.5 418.1,410.7 419.3,428.4 420.4,440.1 421.5,428.4 422.8,406.2 424.3,388.5 426.6,375.3 428.1,355.3 429.2,333.2 430.3,321.0 431.7,318.1 433.6,324.3 435.9,329.9 438.1,335.4 439.4,348.7 440.9,362.0 443.2,374.1 444.7,393.0 446.0,412.9 447.1,430.6 448.3,436.1 449.4,423.9 450.7,401.8 452.2,381.9 454.2,368.6 456.4,353.1 458.0,343.2 459.5,340.9 461.3,344.3 463.1,352.0 465.3,360.9 466.4,373.0 467.7,390.7 469.1,404.0 470.4,410.2 471.7,404.0 473.0,390.7 474.6,380.8 476.1,377.9 477.9,383.0 480.1,389.6 482.3,395.2 483.7,408.5 485.0,426.2 486.3,437.2 488.1,445.0 489.9,452.7 491.2,460.5 492.3,463.3 493.4,454.9 494.5,437.2 495.6,415.1 496.7,395.2 498.1,384.1 500.0,375.3 501.8,367.5 503.6,364.2 504.9,370.8 505.8,384.1 506.9,401.8 508.0,417.3 509.3,430.6 510.7,443.9 511.8,459.4 512.9,477.1 513.5,494.8 514.4,512.5 515.1,524.0 516.0,512.5 516.6,494.8 517.3,477.1 518.0,441.7 518.6,415.1 519.3,384.1 520.0,364.2 520.8,357.5 522.8,357.5 525.1,359.8 526.8,362.0 527.7,375.3 528.6,393.0 529.7,410.7 530.6,426.2 531.7,438.3 532.8,430.6 533.9,410.7 535.0,393.0 536.3,378.6 538.3,374.1 540.5,370.4 542.8,368.2 545.0,370.4 547.9,373.7 550.5,369.7 553.4,366.4 555.4,362.0 557.1,355.3 558.9,350.5 561.1,349.4 563.8,350.5 566.0,353.1 567.3,364.2 568.7,377.5 570.0,387.4 572.6,389.0 576.4,390.1 578.2,397.4 579.7,410.7 581.5,421.7 583.7,428.4 585.9,437.2 588.1,440.5 590.8,443.9 593.0,445.4 594.1,437.2 595.0,419.5 595.7,395.2 596.3,370.8 597.2,353.1 598.5,344.3 599.6,343.2 601.0,349.8 602.5,357.5 604.7,366.4 605.8,377.5 606.9,393.0 608.1,408.5 609.4,421.7 611.4,425.1 612.3,425.5 615.7,429.3 616.9,421.6 618.0,407.8 619.2,398.5 620.5,393.1 621.5,392.4 622.6,398.5 623.9,410.9 624.9,423.2 625.9,433.9 626.6,439.3 627.7,427.8 628.5,410.9 629.6,392.4 630.5,373.9 631.6,362.4 633.4,358.5 635.4,353.1 637.4,350.3 639.3,352.3 640.5,360.0 641.9,367.7 643.6,371.6 645.1,361.6 646.2,346.2 647.3,333.9 648.5,328.9 649.7,328.5 650.8,333.1 652.3,343.1 654.3,350.5 655.9,347.0 657.3,338.5 658.5,328.5 660.0,324.6 661.3,329.3 662.3,341.6 663.3,357.0 663.9,370.8 665.0,383.1 666.2,389.3 668.5,387.0 671.3,383.6 672.4,387.8 673.4,398.5 674.7,410.9 675.4,423.2 676.2,435.5 677.4,441.3 678.5,432.4 679.6,417.0 680.5,401.6 681.6,390.8 682.7,387.8 684.7,380.1 685.9,367.7 687.3,360.8 688.5,359.3 689.8,363.1 690.8,370.8 692.4,377.8 693.9,381.3 696.2,380.1 699.0,377.4 700.5,379.3 701.6,387.8 702.7,398.5 703.9,410.9 705.0,417.8 706.2,412.4 707.3,404.7 708.5,393.9 710.1,389.3 712.4,383.1 714.7,373.1 716.2,370.8 719.3,369.6 722.1,367.7 723.5,361.6 724.4,346.2 725.5,333.9 726.7,327.7 727.8,326.9 729.3,330.8 730.9,337.0 732.4,340.8 734.7,343.1 736.6,349.3 739.3,353.6 740.9,360.0 742.1,369.3 743.2,375.4 744.3,376.7 745.8,373.9 747.8,368.5 749.8,366.5 751.6,367.7 753.5,370.8 756.3,375.0 757.8,380.1 759.3,387.8 761.7,395.5 762.7,404.7 764.0,417.0 765.2,427.8 766.6,434.4 767.8,427.8 768.9,415.5 770.1,403.2 771.2,397.0 772.4,394.2 774.7,396.2 777.8,399.8 780.9,398.5 783.7,398.1 785.2,390.8 786.3,380.1 787.4,369.3 788.6,366.2 789.8,367.7 790.9,375.4 792.0,386.2 793.2,400.1 794.4,406.2 795.5,395.5 796.6,373.9 797.5,357.0 798.6,341.6 799.8,335.4 800.9,334.6 801.8,346.2 802.9,361.6 804.3,377.0 806.3,390.8 807.8,404.7 808.9,418.6 810.2,432.4 811.7,435.5 814.0,439.3 816.8,442.9 819.4,440.1 822.8,436.3 824.2,426.3 825.4,413.9 826.6,404.7 828.5,398.5 830.0,387.8 831.1,373.9 832.3,361.6 833.5,357.3 834.9,361.6 836.2,370.8 837.7,380.1 839.2,384.4 840.8,378.5 842.0,367.7 843.4,359.3 844.6,356.2 845.9,360.0 846.9,369.3 848.0,383.1 849.3,397.0 850.5,404.7 851.6,392.4 852.6,375.4 853.9,358.5 855.1,344.6 856.2,341.1 857.4,347.7 858.8,361.6 860.3,373.9 863.1,379.3 866.2,383.9 869.3,385.1 872.7,387.5 873.9,381.6 875.0,369.3 876.2,358.5 877.4,350.8 878.5,348.5 879.7,352.3 881.1,360.0 883.1,367.3 884.7,363.1 885.9,350.8 887.0,335.4 888.2,320.0 889.6,316.2 890.8,321.6 892.1,332.3 893.6,343.1 895.4,352.3 897.0,361.6 898.5,370.8 900.4,377.4 901.9,373.1 903.1,363.1 904.7,354.7 906.2,351.3 907.8,353.9 909.6,361.6 912.1,367.7 913.6,378.5 915.2,390.8 917.0,401.6 918.8,409.3 920.4,420.1 921.9,430.1 923.5,432.1 924.7,421.6 925.5,404.7 926.2,383.1 927.0,361.6 927.8,347.7 928.9,346.2 930.1,350.8 931.6,360.0 933.2,368.5 934.4,370.5 935.5,363.1 936.7,350.8 937.8,341.6 938.9,336.2 941.6,331.6 944.4,327.4 945.9,329.3 947.0,338.5 948.1,352.3 949.3,366.2 950.9,378.5 952.4,387.8 953.9,401.6 955.5,415.5 957.0,421.6 958.6,417.0 960.9,410.9 963.2,404.7 964.4,393.9 965.2,378.5 966.0,364.7 967.0,353.9 968.1,352.3 969.3,354.7 970.9,361.6 972.7,366.5 975.5,368.5 978.6,371.6 980.4,368.5 982.4,360.8 984.4,358.2 985.8,363.1 987.1,373.9 988.3,386.2 989.8,397.0 992.1,401.6 993.7,409.3 995.5,414.7 997.1,413.2 999.4,407.8 1002.4,400.8 1003.5,389.3 1004.4,373.9 1005.5,361.6 1006.6,355.4 1008.1,356.2 1009.7,363.1 1011.2,370.1 1013.7,373.9 1016.3,381.6 1019.4,387.0 1020.9,395.5 1022.5,401.6 1024.8,404.7 1027.1,413.9 1029.4,418.6 1030.9,410.9 1031.5,406.2 1033.8,392.4 1036.2,381.6 1037.7,369.3 1038.9,358.5 1040.5,355.1 1042.3,357.7 1044.6,361.6 1046.6,363.9 1047.7,373.9 1048.8,389.3 1050.0,404.7 1051.6,415.5 1053.1,410.9 1054.6,401.6 1056.5,396.2 1058.5,395.5 1060.8,397.8 1062.6,399.6 1064.2,393.9 1065.7,383.1 1067.4,375.4 1070.0,374.5 1076.2,374.5 1079.3,376.2 1080.8,380.1 1082.3,389.3 1083.9,398.5 1085.4,403.5 1087.0,398.5 1089.3,387.8 1091.6,383.1 1093.4,375.4 1095.0,367.0 1096.5,363.9 1098.1,367.7 1100.1,375.4 1102.4,378.5 1104.4,383.9 1106.2,389.3 1108.5,391.6 1110.8,395.5 1112.7,398.8 1114.4,395.5 1115.9,387.8 1117.5,382.4 1120.1,378.5 1122.1,369.3 1123.6,363.1 1126.2,360.0 1128.5,357.4 1130.4,357.7 1131.6,364.7 1132.8,377.0 1134.4,385.5 1136.2,388.5 1140.9,387.5 1142.1,381.6 1143.2,370.8 1144.2,360.0 1145.5,353.1 1146.7,351.3 1148.2,355.4 1149.3,363.1 1150.9,370.8 1152.4,373.9 1155.0,375.4 1157.5,377.8 1159.3,375.4 1161.6,371.6 1164.7,367.0 1167.5,363.9 1169.8,363.1 1172.4,365.4 1175.5,367.0 1177.8,370.8 1181.2,375.4 1182.4,381.6 1184.0,389.3 1185.5,392.7 1186.7,386.2 1187.8,373.9 1188.9,361.6 1190.1,350.8 1191.4,347.4 1192.6,352.3 1194.0,364.7 1195.5,373.9 1197.8,381.6 1199.4,389.3 1200.9,398.5 1202.4,402.8 1203.7,398.5 1204.7,389.3 1205.8,377.0 1207.1,364.7 1208.3,361.3 1209.8,363.1 1211.7,369.3 1214.0,373.1 1216.3,378.5 1219.1,384.4 1220.9,380.8 1223.2,375.4 1225.8,370.8 1227.4,363.1 1228.9,355.4 1230.5,352.3 1231.7,357.0 1232.9,366.2 1234.0,377.0 1235.2,383.9 1237.1,386.7 1241.8,385.5 1243.4,378.5 1244.6,364.7 1245.9,353.9 1247.4,350.5 1252.0,350.5 1253.9,353.9 1255.4,364.7 1256.9,377.0 1258.5,383.1 1259.7,375.4 1260.8,361.6 1261.9,350.8 1263.1,343.1 1264.3,341.3 1265.4,346.2 1266.5,355.4 1267.7,363.9 1269.3,367.7 1271.6,372.4 1273.9,375.8 1275.7,376.2 1277.7,372.4 1279.7,368.2 1281.9,367.0 1284.3,369.3 1287.0,371.6 1288.5,378.5 1290.0,389.3 1291.6,397.0 1292.8,396.2 1294.2,387.8 1295.4,377.0 1297.0,370.8 1299.3,372.8 1301.6,375.8 1303.4,377.0 1305.4,373.1 1307.4,369.3 1309.3,368.2 1311.1,370.8 1313.6,374.4 1315.4,377.0 1317.0,383.1 1318.5,389.3 1320.1,390.5 1321.6,384.7 1323.1,373.9 1324.7,367.0 1327.0,363.9 1329.0,359.3 1330.8,356.7 1332.1,360.0 1333.1,370.8 1334.2,383.1 1335.5,392.4 1336.7,397.3 1338.1,389.3 1339.0,373.9 1340.1,358.5 1341.3,347.7 1342.8,345.4 1344.7,347.0 1348.5,349.3 1350.1,355.4 1351.2,363.1 1352.7,369.3 1355.5,371.6 1357.8,374.4 1360.1,375.4 1361.9,378.5 1363.6,381.3 1365.5,380.1 1367.0,372.4 1368.6,362.4 1370.6,359.7 1372.1,364.7 1373.6,372.4 1375.5,377.3 1377.0,372.4 1378.6,361.6 1380.1,352.3 1381.6,349.6 1383.2,353.9 1385.0,361.6 1387.5,366.2 1389.7,371.6 1392.4,377.4 1394.7,373.9 1397.0,370.8 1399.4,368.5 1400.9,358.5 1402.4,349.3 1404.4,347.3 1407.1,347.7 1409.4,348.5 1412.4,351.3 1415.5,353.9 1417.8,359.3 1419.4,363.1 1421.4,364.4 1423.5,360.8 1425.5,357.7 1427.5,356.7 1429.4,351.6 1431.2,347.7 1432.8,348.5 1434.8,353.9 1437.1,357.4 1439.4,354.7 1441.7,352.3 1444.0,350.8 1446.3,346.2 1448.6,343.6 1450.9,344.6 1453.1,346.7 1456.2,344.6 1459.5,340.8 1462.0,337.0 1463.9,330.0 1465.4,328.9 1466.6,333.1 1467.7,341.6 1468.8,349.3 1470.5,353.4 1473.1,352.7 1476.5,352.7 1478.5,356.2 1480.8,358.5 1482.6,360.5 1485.1,357.0 1487.4,354.3 1489.7,355.7 1492.3,358.2 1496.2,359.3 1504.7,359.3 1505.7,355.4 1507.0,349.3 1508.5,343.1 1510.4,341.9 1513.1,343.9 1515.9,345.7 1517.7,349.3 1520.1,353.1 1522.4,357.7 1523.9,363.1 1525.4,367.0 1526.5,368.2 1527.8,364.7 1529.3,358.5 1530.8,354.7 1533.1,352.3 1535.5,347.7 1537.8,345.4 1540.8,345.7 1544.2,346.5 1546.2,350.0 1548.5,353.4 1551.6,352.3 1554.7,351.6 1557.8,353.1 1560.1,354.7 1561.6,350.8 1563.2,345.4 1565.2,342.3 1572.4,342.3 1573.9,343.9 1576.3,345.7 1579.3,345.1 1581.6,343.6 1583.9,342.8 1586.3,340.8 1588.6,340.3 1594.0,340.3 1595.5,343.1 1597.5,346.2 1599.7,349.0 1602.4,346.2 1605.5,343.6 1608.6,340.8 1611.4,339.3 1613.2,336.2 1615.5,333.4 1617.8,333.1 1621.7,334.6 1623.2,337.7 1624.7,342.3 1626.3,345.1 1629.4,346.7 1631.7,348.5 1633.5,348.0 1635.5,343.9 1637.1,340.8 1638.6,339.3 1640.9,341.9 1644.3,346.2 1647.7,340.0 1651.5,337.0 1655.4,332.3 1658.5,337.0 1661.6,340.3 1663.1,346.2 1664.6,353.9 1666.5,358.5 1668.5,353.9 1670.8,349.0 1673.9,348.5 1677.7,348.7 1680.0,352.3 1682.3,356.5 1684.6,354.7 1687.0,350.0 1688.8,348.5 1690.8,352.3 1692.3,358.5 1693.9,361.1 1699.3,361.6 1701.3,364.7 1702.8,371.6 1704.7,377.8 1706.2,378.5 1709.3,378.2 1711.6,376.2 1713.9,371.6 1716.2,368.1 1717.8,370.8 1719.3,376.2 1720.8,380.1 1723.9,383.9 1726.2,387.8 1729.3,391.6 1731.6,396.2 1733.1,397.5 1736.2,396.7 1738.5,395.5 1740.4,398.5 1741.6,404.7 1742.8,410.1 1745.5,417.8 1746.7,425.5 1747.8,432.4 1751.9,447.8 1753.4,461.2 1754.9,471.6 1757.0,480.6 1758.8,494.0 1760.3,504.5 1762.4,514.9 1763.9,532.8 1765.4,547.8 1766.9,562.7 1768.4,577.6 1769.9,590.1 1773.4,591.0" fill="none" stroke="#00ff00" stroke-width="1.05" shape-rendering="auto" stroke-linejoin="round"/></svg><svg style="left:75px;top:725px" width="1703" height="225" viewBox="75 725 1703 225" shape-rendering="crispEdges"><rect x="75" y="725" width="1703" height="225" fill="#000"/><path d="M95.5 725V950M206.5 725V950M292.5 725V950M362.5 725V950M421.5 725V950M472.5 725V950M517.5 725V950M558.5 725V950M824.5 725V950M980.5 725V950M1090.5 725V950M1176.5 725V950M1246.5 725V950M1305.5 725V950M1356.5 725V950M1402.5 725V950M1442.5 725V950M1708.5 725V950M75 725.5H1778M75 755.5H1778M75 785.5H1778M75 815.5H1778M75 845.5H1778M75 875.5H1778M75 905.5H1778M75 935.5H1778" stroke="#084808" fill="none" stroke-width="1"/><text x="1749" y="746" font-family="Liberation Serif,serif" font-style="italic" font-weight="bold" font-size="24" fill="#808080">S</text><text x="1761" y="746" font-family="Liberation Serif,serif" font-style="italic" font-size="18" fill="#808080">+</text><polyline points="75,725.5 1769.5,725.5 1770,727 1770.800,740.400 1771.400,768.700 1772.800,794.300 1773.900,817.300 1774.800,824.700 1775.700,825.700" fill="none" stroke="#00ff00" stroke-width="1.05" shape-rendering="auto" stroke-linejoin="round"/></svg>
<div style="left:75px;top:591px;width:1701px;height:12px;background:#f8f8f8"></div>
<div class="rais" style="left:75px;top:591px;width:17px;height:12px;"><div style="left:5px;top:2px;border:3.500px solid transparent;border-right:4px solid #000;border-left:none"></div></div>
<div class="rais" style="left:1759px;top:591px;width:17px;height:12px;"><div style="left:6px;top:2px;border:3.500px solid transparent;border-left:4px solid #000;border-right:none"></div></div>
<div class="rais" style="left:1742px;top:591px;width:17px;height:12px;"></div>
<div style="left:75px;top:950px;width:1703px;height:12px;background:#f8f8f8"></div>
<div class="rais" style="left:75px;top:950px;width:17px;height:12px;"><div style="left:5px;top:2px;border:3.500px solid transparent;border-right:4px solid #000;border-left:none"></div></div>
<div class="rais" style="left:1761px;top:950px;width:17px;height:12px;"><div style="left:6px;top:2px;border:3.500px solid transparent;border-left:4px solid #000;border-right:none"></div></div>
<div class="rais" style="left:1744px;top:950px;width:17px;height:12px;"></div>
<div style="left:75px;top:603px;width:1px;height:3px;background:#000"></div>
<div class="tc" style="left:45px;top:606px;width:60px">300</div>
<div style="left:186px;top:603px;width:1px;height:3px;background:#000"></div>
<div class="tc" style="left:156px;top:606px;width:60px">400</div>
<div style="left:273px;top:603px;width:1px;height:3px;background:#000"></div>
<div class="tc" style="left:243px;top:606px;width:60px">500</div>
<div style="left:344px;top:603px;width:1px;height:3px;background:#000"></div>
<div class="tc" style="left:314px;top:606px;width:60px">600</div>
<div style="left:404px;top:603px;width:1px;height:3px;background:#000"></div>
<div class="tc" style="left:374px;top:606px;width:60px">700</div>
<div style="left:455px;top:603px;width:1px;height:3px;background:#000"></div>
<div class="tc" style="left:425px;top:606px;width:60px">800</div>
<div style="left:501px;top:603px;width:1px;height:3px;background:#000"></div>
<div class="tc" style="left:471px;top:606px;width:60px">900</div>
<div style="left:542px;top:603px;width:1px;height:3px;background:#000"></div>
<div class="tc" style="left:512px;top:606px;width:60px">1.0k</div>
<div style="left:811px;top:603px;width:1px;height:3px;background:#000"></div>
<div class="tc" style="left:781px;top:606px;width:60px">2.0k</div>
<div style="left:969px;top:603px;width:1px;height:3px;background:#000"></div>
<div class="tc" style="left:939px;top:606px;width:60px">3.0k</div>
<div style="left:1080px;top:603px;width:1px;height:3px;background:#000"></div>
<div class="tc" style="left:1050px;top:606px;width:60px">4.0k</div>
<div style="left:1167px;top:603px;width:1px;height:3px;background:#000"></div>
<div class="tc" style="left:1137px;top:606px;width:60px">5.0k</div>
<div style="left:1238px;top:603px;width:1px;height:3px;background:#000"></div>
<div class="tc" style="left:1208px;top:606px;width:60px">6.0k</div>
<div style="left:1298px;top:603px;width:1px;height:3px;background:#000"></div>
<div class="tc" style="left:1268px;top:606px;width:60px">7.0k</div>
<div style="left:1350px;top:603px;width:1px;height:3px;background:#000"></div>
<div class="tc" style="left:1320px;top:606px;width:60px">8.0k</div>
<div style="left:1395px;top:603px;width:1px;height:3px;background:#000"></div>
<div class="tc" style="left:1365px;top:606px;width:60px">9.0k</div>
<div style="left:1436px;top:603px;width:1px;height:3px;background:#000"></div>
<div class="tc" style="left:1406px;top:606px;width:60px">10.0k</div>
<div style="left:1706px;top:603px;width:1px;height:3px;background:#000"></div>
<div class="tc" style="left:1676px;top:606px;width:60px">20.0k</div>
<div class="tc" style="left:894px;top:618px;width:120px">Frequency (Hz)</div>
<div style="left:95px;top:962px;width:1px;height:3px;background:#000"></div>
<div class="tc" style="left:65px;top:965px;width:60px">300</div>
<div style="left:206px;top:962px;width:1px;height:3px;background:#000"></div>
<div class="tc" style="left:176px;top:965px;width:60px">400</div>
<div style="left:292px;top:962px;width:1px;height:3px;background:#000"></div>
<div class="tc" style="left:262px;top:965px;width:60px">500</div>
<div style="left:362px;top:962px;width:1px;height:3px;background:#000"></div>
<div class="tc" style="left:332px;top:965px;width:60px">600</div>
<div style="left:421px;top:962px;width:1px;height:3px;background:#000"></div>
<div class="tc" style="left:391px;top:965px;width:60px">700</div>
<div style="left:472px;top:962px;width:1px;height:3px;background:#000"></div>
<div class="tc" style="left:442px;top:965px;width:60px">800</div>
<div style="left:517px;top:962px;width:1px;height:3px;background:#000"></div>
<div class="tc" style="left:487px;top:965px;width:60px">900</div>
<div style="left:558px;top:962px;width:1px;height:3px;background:#000"></div>
<div class="tc" style="left:528px;top:965px;width:60px">1.0k</div>
<div style="left:824px;top:962px;width:1px;height:3px;background:#000"></div>
<div class="tc" style="left:794px;top:965px;width:60px">2.0k</div>
<div style="left:980px;top:962px;width:1px;height:3px;background:#000"></div>
<div class="tc" style="left:950px;top:965px;width:60px">3.0k</div>
<div style="left:1090px;top:962px;width:1px;height:3px;background:#000"></div>
<div class="tc" style="left:1060px;top:965px;width:60px">4.0k</div>
<div style="left:1176px;top:962px;width:1px;height:3px;background:#000"></div>
<div class="tc" style="left:1146px;top:965px;width:60px">5.0k</div>
<div style="left:1246px;top:962px;width:1px;height:3px;background:#000"></div>
<div class="tc" style="left:1216px;top:965px;width:60px">6.0k</div>
<div style="left:1305px;top:962px;width:1px;height:3px;background:#000"></div>
<div class="tc" style="left:1275px;top:965px;width:60px">7.0k</div>
<div style="left:1356px;top:962px;width:1px;height:3px;background:#000"></div>
<div class="tc" style="left:1326px;top:965px;width:60px">8.0k</div>
<div style="left:1402px;top:962px;width:1px;height:3px;background:#000"></div>
<div class="tc" style="left:1372px;top:965px;width:60px">9.0k</div>
<div style="left:1442px;top:962px;width:1px;height:3px;background:#000"></div>
<div class="tc" style="left:1412px;top:965px;width:60px">10.0k</div>
<div style="left:1708px;top:962px;width:1px;height:3px;background:#000"></div>
<div class="tc" style="left:1678px;top:965px;width:60px">20.0k</div>
<div class="tc" style="left:894px;top:977px;width:120px">Frequency (Hz)</div>
<div class="pm" style="left:1792px;top:621px;width:10px;height:10px;"><div style="left:2px;top:4px;width:5px;height:1px;background:#000"></div>
<div style="left:4px;top:2px;width:1px;height:5px;background:#000"></div></div>
<div class="pm" style="left:1884px;top:621px;width:10px;height:10px;"><div style="left:3px;top:4px;width:3px;height:1px;background:#000"></div></div>
<div class="pm" style="left:1794px;top:980px;width:10px;height:10px;"><div style="left:2px;top:4px;width:5px;height:1px;background:#000"></div>
<div style="left:4px;top:2px;width:1px;height:5px;background:#000"></div></div>
<div class="pm" style="left:1886px;top:980px;width:10px;height:10px;"><div style="left:3px;top:4px;width:3px;height:1px;background:#000"></div></div>
<div class="tc" style="left:1812px;top:181px;width:47px;text-decoration:underline">Overlays</div>
<div class="tc" style="left:1773.5px;top:199px;width:40px;transform:rotate(-90deg)">Set</div>
<div class="tc" style="left:1791.5px;top:200px;width:40px;transform:rotate(-90deg)">On</div>
<div class="obtn" style="left:1820px;top:198px;width:60px;height:16px;line-height:14px">Options...</div>
<div class="obtn" style="left:1783px;top:219px;width:20px;height:14px;">1</div>
<div class="chk" style="left:1805px;top:220px;width:13px;height:13px;"></div>
<div class="t" style="left:1821px;top:219px;color:#008000;font-size:11.600px">Overlay 1</div>
<div class="obtn" style="left:1783px;top:235px;width:20px;height:14px;">2</div>
<div class="chk" style="left:1805px;top:236px;width:13px;height:13px;"></div>
<div class="t" style="left:1821px;top:235px;color:#00b4b4;font-size:11.600px">Overlay 2</div>
<div class="obtn" style="left:1783px;top:251px;width:20px;height:14px;">3</div>
<div class="chk" style="left:1805px;top:252px;width:13px;height:13px;"></div>
<div class="t" style="left:1821px;top:251px;color:#800080;font-size:11.600px">Overlay 3</div>
<div class="obtn" style="left:1783px;top:267px;width:20px;height:14px;">4</div>
<div class="chk" style="left:1805px;top:268px;width:13px;height:13px;"></div>
<div class="t" style="left:1821px;top:267px;color:#ff00ff;font-size:11.600px">Overlay 4</div>
<div class="obtn" style="left:1783px;top:283px;width:20px;height:14px;">5</div>
<div class="chk" style="left:1805px;top:284px;width:13px;height:13px;"></div>
<div class="t" style="left:1821px;top:283px;color:#804000;font-size:11.600px">Overlay 5</div>
<div class="obtn" style="left:1783px;top:299px;width:20px;height:14px;">6</div>
<div class="chk" style="left:1805px;top:300px;width:13px;height:13px;"></div>
<div class="t" style="left:1821px;top:299px;color:#ff8040;font-size:11.600px">Overlay 6</div>
<div class="obtn" style="left:1783px;top:315px;width:20px;height:14px;">7</div>
<div class="chk" style="left:1805px;top:316px;width:13px;height:13px;"></div>
<div class="t" style="left:1821px;top:315px;color:#00ff00;font-size:11.600px">Overlay 7</div>
<div class="obtn" style="left:1783px;top:331px;width:20px;height:14px;">8</div>
<div class="chk" style="left:1805px;top:332px;width:13px;height:13px;"></div>
<div class="t" style="left:1821px;top:331px;color:#80e0e0;font-size:11.600px">Overlay 8</div>
<div class="obtn" style="left:1783px;top:347px;width:20px;height:14px;">9</div>
<div class="chk" style="left:1805px;top:348px;width:13px;height:13px;"></div>
<div class="t" style="left:1821px;top:347px;color:#c8c800;font-size:11.600px">Overlay 9</div>
<div class="obtn" style="left:1783px;top:363px;width:20px;height:14px;">10</div>
<div class="chk" style="left:1805px;top:364px;width:13px;height:13px;"></div>
<div class="t" style="left:1821px;top:363px;color:#ff80ff;font-size:11.600px">Overlay 10</div>
<div class="obtn" style="left:1783px;top:379px;width:20px;height:14px;">11</div>
<div class="chk" style="left:1805px;top:380px;width:13px;height:13px;"></div>
<div class="t" style="left:1821px;top:379px;color:#808000;font-size:11.600px">Overlay 11</div>
<div class="obtn" style="left:1783px;top:395px;width:20px;height:14px;">12</div>
<div class="chk" style="left:1805px;top:396px;width:13px;height:13px;"></div>
<div class="t" style="left:1821px;top:395px;color:#ffa040;font-size:11.600px">Overlay 12</div>
<div class="obtn" style="left:1783px;top:411px;width:20px;height:14px;">C1</div>
<div class="chk" style="left:1805px;top:412px;width:13px;height:13px;"></div>
<div class="t" style="left:1821px;top:411px;color:#000;font-size:11.600px">Overlay 13</div>
<div class="obtn" style="left:1783px;top:427px;width:20px;height:14px;">C2</div>
<div class="chk" style="left:1805px;top:428px;width:13px;height:13px;"></div>
<div class="t" style="left:1821px;top:427px;color:#808080;font-size:11.600px">Overlay 14</div>
<div class="tc" style="left:1814px;top:708px;width:47px;text-decoration:underline">Overlays</div>
<div class="tc" style="left:1775.5px;top:726px;width:40px;transform:rotate(-90deg)">Set</div>
<div class="tc" style="left:1793.5px;top:727px;width:40px;transform:rotate(-90deg)">On</div>
<div class="obtn" style="left:1822px;top:725px;width:60px;height:16px;line-height:14px">Options...</div>
<div class="obtn" style="left:1785px;top:746px;width:20px;height:14px;">1</div>
<div class="chk" style="left:1807px;top:747px;width:13px;height:13px;"></div>
<div class="t" style="left:1823px;top:746px;color:#008000;font-size:11.600px">Overlay 1</div>
<div class="obtn" style="left:1785px;top:762px;width:20px;height:14px;">2</div>
<div class="chk" style="left:1807px;top:763px;width:13px;height:13px;"></div>
<div class="t" style="left:1823px;top:762px;color:#00b4b4;font-size:11.600px">Overlay 2</div>
<div class="obtn" style="left:1785px;top:778px;width:20px;height:14px;">3</div>
<div class="chk" style="left:1807px;top:779px;width:13px;height:13px;"></div>
<div class="t" style="left:1823px;top:778px;color:#800080;font-size:11.600px">Overlay 3</div>
<div class="obtn" style="left:1785px;top:794px;width:20px;height:14px;">4</div>
<div class="chk" style="left:1807px;top:795px;width:13px;height:13px;"></div>
<div class="t" style="left:1823px;top:794px;color:#ff00ff;font-size:11.600px">Overlay 4</div>
<div class="obtn" style="left:1785px;top:810px;width:20px;height:14px;">5</div>
<div class="chk" style="left:1807px;top:811px;width:13px;height:13px;"></div>
<div class="t" style="left:1823px;top:810px;color:#804000;font-size:11.600px">Overlay 5</div>
<div class="obtn" style="left:1785px;top:826px;width:20px;height:14px;">6</div>
<div class="chk" style="left:1807px;top:827px;width:13px;height:13px;"></div>
<div class="t" style="left:1823px;top:826px;color:#ff8040;font-size:11.600px">Overlay 6</div>
<div class="obtn" style="left:1785px;top:842px;width:20px;height:14px;">7</div>
<div class="chk" style="left:1807px;top:843px;width:13px;height:13px;"></div>
<div class="t" style="left:1823px;top:842px;color:#00ff00;font-size:11.600px">Overlay 7</div>
<div class="obtn" style="left:1785px;top:858px;width:20px;height:14px;">8</div>
<div class="chk" style="left:1807px;top:859px;width:13px;height:13px;"></div>
<div class="t" style="left:1823px;top:858px;color:#80e0e0;font-size:11.600px">Overlay 8</div>
<div class="obtn" style="left:1785px;top:874px;width:20px;height:14px;">9</div>
<div class="chk" style="left:1807px;top:875px;width:13px;height:13px;"></div>
<div class="t" style="left:1823px;top:874px;color:#c8c800;font-size:11.600px">Overlay 9</div>
<div class="obtn" style="left:1785px;top:890px;width:20px;height:14px;">10</div>
<div class="chk" style="left:1807px;top:891px;width:13px;height:13px;"></div>
<div class="t" style="left:1823px;top:890px;color:#ff80ff;font-size:11.600px">Overlay 10</div>
<div class="obtn" style="left:1785px;top:906px;width:20px;height:14px;">11</div>
<div class="chk" style="left:1807px;top:907px;width:13px;height:13px;"></div>
<div class="t" style="left:1823px;top:906px;color:#808000;font-size:11.600px">Overlay 11</div>
<div class="obtn" style="left:1785px;top:922px;width:20px;height:14px;">12</div>
<div class="chk" style="left:1807px;top:923px;width:13px;height:13px;"></div>
<div class="t" style="left:1823px;top:922px;color:#ffa040;font-size:11.600px">Overlay 12</div>
<div class="obtn" style="left:1785px;top:938px;width:20px;height:14px;">C1</div>
<div class="chk" style="left:1807px;top:939px;width:13px;height:13px;"></div>
<div class="t" style="left:1823px;top:938px;color:#000;font-size:11.600px">Composite 1</div>
<div style="left:1266px;top:39px;width:192px;height:119px;background:#f0f0f0"></div>
<div style="left:1266px;top:39px;width:192px;height:31px;background:#fff;border-top:1px solid #f4f4f4"></div>
<div class="t" style="left:1274px;top:47px;color:#999;font-size:11.600px">Signal Generator</div>
<div class="obtn" style="left:1270px;top:75px;width:106px;height:25px;color:#000;line-height:22px;font-size:12.500px">Run</div>
<div class="obtn" style="left:1382px;top:75px;width:90px;height:25px;color:#000;line-height:22px;font-size:12.500px">Level</div>
<div class="obtn" style="left:1382px;top:107px;width:90px;height:22px;color:#a0a0a0;line-height:19px;font-size:12.500px">Details...</div>
<div class="obtn" style="left:1382px;top:135px;width:90px;height:22px;color:#a0a0a0;line-height:19px;font-size:12.500px">Details...</div>
<div class="t" style="left:1272px;top:110px;font-size:12.500px">L</div>
<div class="t" style="left:1272px;top:138px;font-size:12.500px">R</div>
<div class="sunk" style="left:1286px;top:106px;width:89px;height:22px;"><div class="t" style="left:3px;top:3px;font-size:12.5px">Pink Noise</div>
<div class="dd" style="left:69px;top:1px;width:17px;height:18px;"></div></div>
<div class="sunk" style="left:1286px;top:134px;width:89px;height:22px;"><div class="t" style="left:3px;top:3px;font-size:12.5px">Pink Noise</div>
<div class="dd" style="left:69px;top:1px;width:17px;height:18px;"></div></div>
<div style="left:1458px;top:31px;width:304px;height:127px;background:#fff;border-top:1px solid #f4f4f4"></div>
<div class="t" style="left:1466px;top:39px;color:#999;font-size:12px">THD</div>
<div style="left:1742px;top:39px;width:19px;height:19px;background:#e5e5e5;color:#f8f8f8;text-align:center;line-height:17px;font-size:13px">&#215;</div>
<div style="left:1458px;top:62px;width:304px;height:1px;background:#000"></div>
<div style="left:1458px;top:110px;width:304px;height:1px;background:#000"></div>
<div style="left:1458px;top:62px;width:1px;height:96px;background:#000"></div>
<div class="t big" style="left:1462.5px;top:66px;font-size:37.520px;line-height:44px;height:44px">146.407654 %</div>
<div class="t big" style="left:1462.5px;top:114px;font-size:37.520px;line-height:44px;height:44px">172.968369 %</div>
<div style="left:1px;top:1010px;width:1915px;height:27px;background:#f0f0f0"></div>
<div style="left:1px;top:1010px;width:1915px;height:3px;background:#fff"></div>
<div style="left:1px;top:1015px;width:1915px;height:1px;background:#a0a0a0"></div>
<div style="left:4px;top:1016px;width:118px;height:17px;border:1px solid;border-color:#a0a0a0 #fff #fff #a0a0a0"><div class="t" style="left:3px;top:-1px;font-size:12.200px">Stopped</div></div>
<div style="left:124px;top:1016px;width:101px;height:17px;border:1px solid;border-color:#a0a0a0 #fff #fff #a0a0a0"><div class="t" style="left:3px;top:-1px;font-size:12.200px">Real Time</div></div>
<div style="left:227px;top:1016px;width:71px;height:17px;border:1px solid;border-color:#a0a0a0 #fff #fff #a0a0a0"><div class="t" style="left:3px;top:-1px;font-size:12.200px">96000 Hz</div></div>
<div style="left:300px;top:1016px;width:51px;height:17px;border:1px solid;border-color:#a0a0a0 #fff #fff #a0a0a0"><div class="t" style="left:3px;top:-1px;font-size:12.200px">24 Bit</div></div>
<div style="left:353px;top:1016px;width:51px;height:17px;border:1px solid;border-color:#a0a0a0 #fff #fff #a0a0a0"><div class="t" style="left:3px;top:-1px;font-size:12.200px">Stereo</div></div>
<div style="left:406px;top:1016px;width:101px;height:17px;border:1px solid;border-color:#a0a0a0 #fff #fff #a0a0a0"><div class="t" style="left:3px;top:-1px;font-size:12.200px">FFT 32768 pts</div></div>
<div style="left:509px;top:1016px;width:73px;height:17px;border:1px solid;border-color:#a0a0a0 #fff #fff #a0a0a0"><div class="t" style="left:3px;top:-1px;font-size:12.200px">Hanning</div></div>
<div style="left:584px;top:1016px;width:1331px;height:17px;border:1px solid;border-color:#a0a0a0 #fff #fff #a0a0a0"><div class="t" style="left:3px;top:-1px;font-size:12.200px"></div></div>
<div style="left:0px;top:1036px;width:1918px;height:1px;background:#a8a8a8"></div>
<div style="left:0px;top:1037px;width:1918px;height:2px;background:#6a6a6a"></div>
<div style="left:524px;top:1038px;width:284px;height:1px;background:#fff"></div>
<div style="left:526px;top:1038px;width:140px;height:1px;background:repeating-linear-gradient(90deg,#3a5a8c 0,#3a5a8c 3px,#fff 3px,#fff 5px,#6a86b0 5px,#6a86b0 6px,#fff 6px,#fff 8px)"></div>
<div style="left:690px;top:1038px;width:116px;height:1px;background:repeating-linear-gradient(90deg,#3a5a8c 0,#3a5a8c 3px,#fff 3px,#fff 5px,#6a86b0 5px,#6a86b0 6px,#fff 6px,#fff 8px)"></div>
</body></html>
